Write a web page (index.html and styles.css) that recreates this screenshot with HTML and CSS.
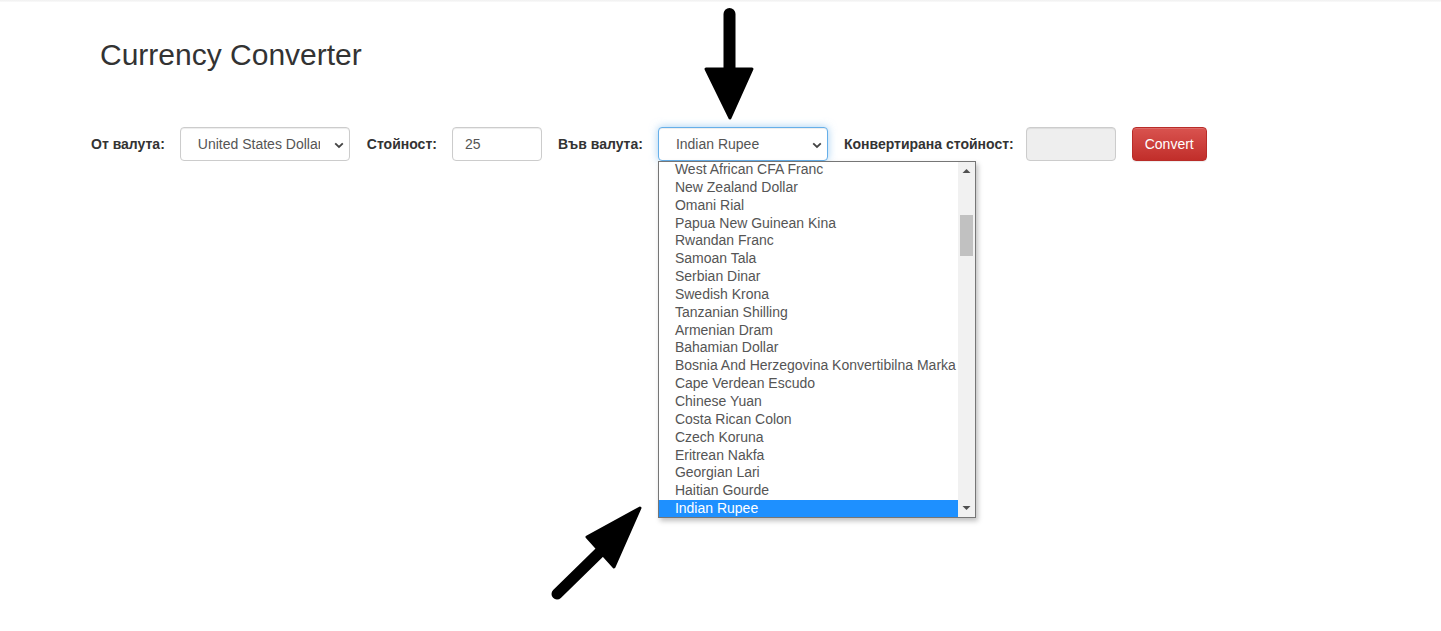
FILE: index.html
```html
<!DOCTYPE html>
<html lang="bg">
<head>
<meta charset="utf-8">
<title>Currency Converter</title>
<link rel="stylesheet" href="styles.css">
</head>
<body>
<div class="topline"></div>
<main class="page">
  <h2 class="title">Currency Converter</h2>
  <form class="row">
    <label class="lbl">От валута:</label>
    <div class="select">
      <span class="sel-text">United States Dollar</span>
      <svg class="chev" width="10" height="7" viewBox="0 0 10 7"><path d="M1.2 1.3 L5 5 L8.8 1.3" fill="none" stroke="#444" stroke-width="1.8"/></svg>
    </div>
    <label class="lbl">Стойност:</label>
    <div class="input">25</div>
    <label class="lbl">Във валута:</label>
    <div class="dd-wrap">
      <div class="select focus">
        <span class="sel-text">Indian Rupee</span>
        <svg class="chev" width="10" height="7" viewBox="0 0 10 7"><path d="M1.2 1.3 L5 5 L8.8 1.3" fill="none" stroke="#444" stroke-width="1.8"/></svg>
      </div>
      <div class="list">
        <ul class="items">
          <li>West African CFA Franc</li>
          <li>New Zealand Dollar</li>
          <li>Omani Rial</li>
          <li>Papua New Guinean Kina</li>
          <li>Rwandan Franc</li>
          <li>Samoan Tala</li>
          <li>Serbian Dinar</li>
          <li>Swedish Krona</li>
          <li>Tanzanian Shilling</li>
          <li>Armenian Dram</li>
          <li>Bahamian Dollar</li>
          <li>Bosnia And Herzegovina Konvertibilna Marka</li>
          <li>Cape Verdean Escudo</li>
          <li>Chinese Yuan</li>
          <li>Costa Rican Colon</li>
          <li>Czech Koruna</li>
          <li>Eritrean Nakfa</li>
          <li>Georgian Lari</li>
          <li>Haitian Gourde</li>
          <li class="sel">Indian Rupee</li>
        </ul>
        <div class="sb">
          <svg class="sb-arrow" width="17" height="17" viewBox="0 0 17 17"><path d="M4.5 11 L8.5 7 L12.5 11 Z" fill="#505050"/></svg>
          <div class="sb-track"><div class="sb-thumb"></div></div>
          <svg class="sb-arrow" width="17" height="17" viewBox="0 0 17 17"><path d="M4.5 6 L8.5 10 L12.5 6 Z" fill="#505050"/></svg>
        </div>
      </div>
    </div>
    <label class="lbl lbl-long">Конвертирана стойност:</label>
    <div class="input disabled"></div>
    <button type="button" class="btn">Convert</button>
  </form>
</main>
<svg class="arrows" width="1441" height="631" viewBox="0 0 1441 631">
  <line x1="729.5" y1="14" x2="729.5" y2="72" stroke="#000" stroke-width="12" stroke-linecap="round"/>
  <path d="M706 69 L752 69 L730 118 Z" fill="#000" stroke="#000" stroke-width="3" stroke-linejoin="round"/>
  <line x1="557" y1="594" x2="602" y2="550" stroke="#000" stroke-width="11" stroke-linecap="round"/>
  <path d="M640 508 L587 537 L614 567 Z" fill="#000" stroke="#000" stroke-width="3" stroke-linejoin="round"/>
</svg>
</body>
</html>
```
FILE: styles.css
```css
html, body {
  margin: 0;
  padding: 0;
  background: #fff;
}
body {
  font-family: "Liberation Sans", Arial, Helvetica, sans-serif;
  font-size: 14px;
  color: #333;
  width: 1441px;
  height: 631px;
  overflow: hidden;
  position: relative;
}
.topline {
  height: 2px;
  background: linear-gradient(#f0f0f0, #fafafa);
}
.page {
  padding-left: 91px;
}
.title {
  margin: 36px 0 0 9px;
  font-size: 30px;
  font-weight: 500;
  line-height: 33px;
  color: #333;
}
.row {
  display: flex;
  align-items: center;
  margin-top: 56px;
  height: 34px;
}
.lbl {
  font-weight: bold;
  font-size: 14px;
  color: #333;
  margin-right: 15px;
  white-space: nowrap;
}
.lbl-long {
  margin-right: 12px;
}
.select {
  position: relative;
  box-sizing: border-box;
  width: 170px;
  height: 34px;
  border: 1px solid #ccc;
  border-radius: 4px;
  background: #fff;
  box-shadow: inset 0 1px 1px rgba(0,0,0,.075);
  display: flex;
  align-items: center;
  padding-left: 17px;
  padding-right: 29px;
  color: #555;
  margin-right: 17px;
  white-space: nowrap;
}
.sel-text {
  overflow: hidden;
  display: block;
  min-width: 0;
  flex: 1;
}
.select.focus {
  border-color: #66afe9;
  box-shadow: inset 0 1px 1px rgba(0,0,0,.075), 0 0 8px rgba(102,175,233,.6);
  margin-right: 16px;
}
.chev {
  position: absolute;
  right: 5px;
  top: 14px;
}
.input {
  box-sizing: border-box;
  width: 90px;
  height: 34px;
  border: 1px solid #ccc;
  border-radius: 4px;
  box-shadow: inset 0 1px 1px rgba(0,0,0,.075);
  padding: 0 12px;
  display: flex;
  align-items: center;
  color: #555;
  margin-right: 16px;
}
.input.disabled {
  background: #eee;
}
.dd-wrap {
  position: relative;
}
.list {
  position: absolute;
  left: 0;
  top: 34px;
  width: 318px;
  height: 357px;
  box-sizing: border-box;
  border: 1px solid #767676;
  background: #fff;
  box-shadow: 2px 3px 5px rgba(0,0,0,.25);
  display: flex;
  z-index: 5;
}
.items {
  list-style: none;
  margin: 0;
  padding: 0;
  flex: 1;
  overflow: hidden;
  margin-top: -1px;
}
.items li {
  height: 17.85px;
  line-height: 17.85px;
  padding-left: 16px;
  color: #555;
  white-space: nowrap;
}
.items li.sel {
  background: #1e90ff;
  color: #fff;
}
.sb {
  width: 17px;
  background: #f1f1f1;
  display: flex;
  flex-direction: column;
}
.sb-arrow {
  display: block;
  flex: none;
}
.sb-track {
  flex: 1;
  padding: 0 2px;
}
.sb-thumb {
  margin-top: 36px;
  height: 41px;
  background: #c1c1c1;
}
.btn {
  box-sizing: border-box;
  height: 34px;
  width: 75px;
  padding: 0;
  border: 1px solid #b92c28;
  border-radius: 4px;
  background: linear-gradient(#d9534f, #c12e2a);
  color: #fff;
  font-family: "Liberation Sans", Arial, sans-serif;
  font-size: 14px;
  box-shadow: inset 0 1px 0 rgba(255,255,255,.15), 0 1px 1px rgba(0,0,0,.075);
}
.arrows {
  position: absolute;
  left: 0;
  top: 0;
  pointer-events: none;
  z-index: 10;
}
```
